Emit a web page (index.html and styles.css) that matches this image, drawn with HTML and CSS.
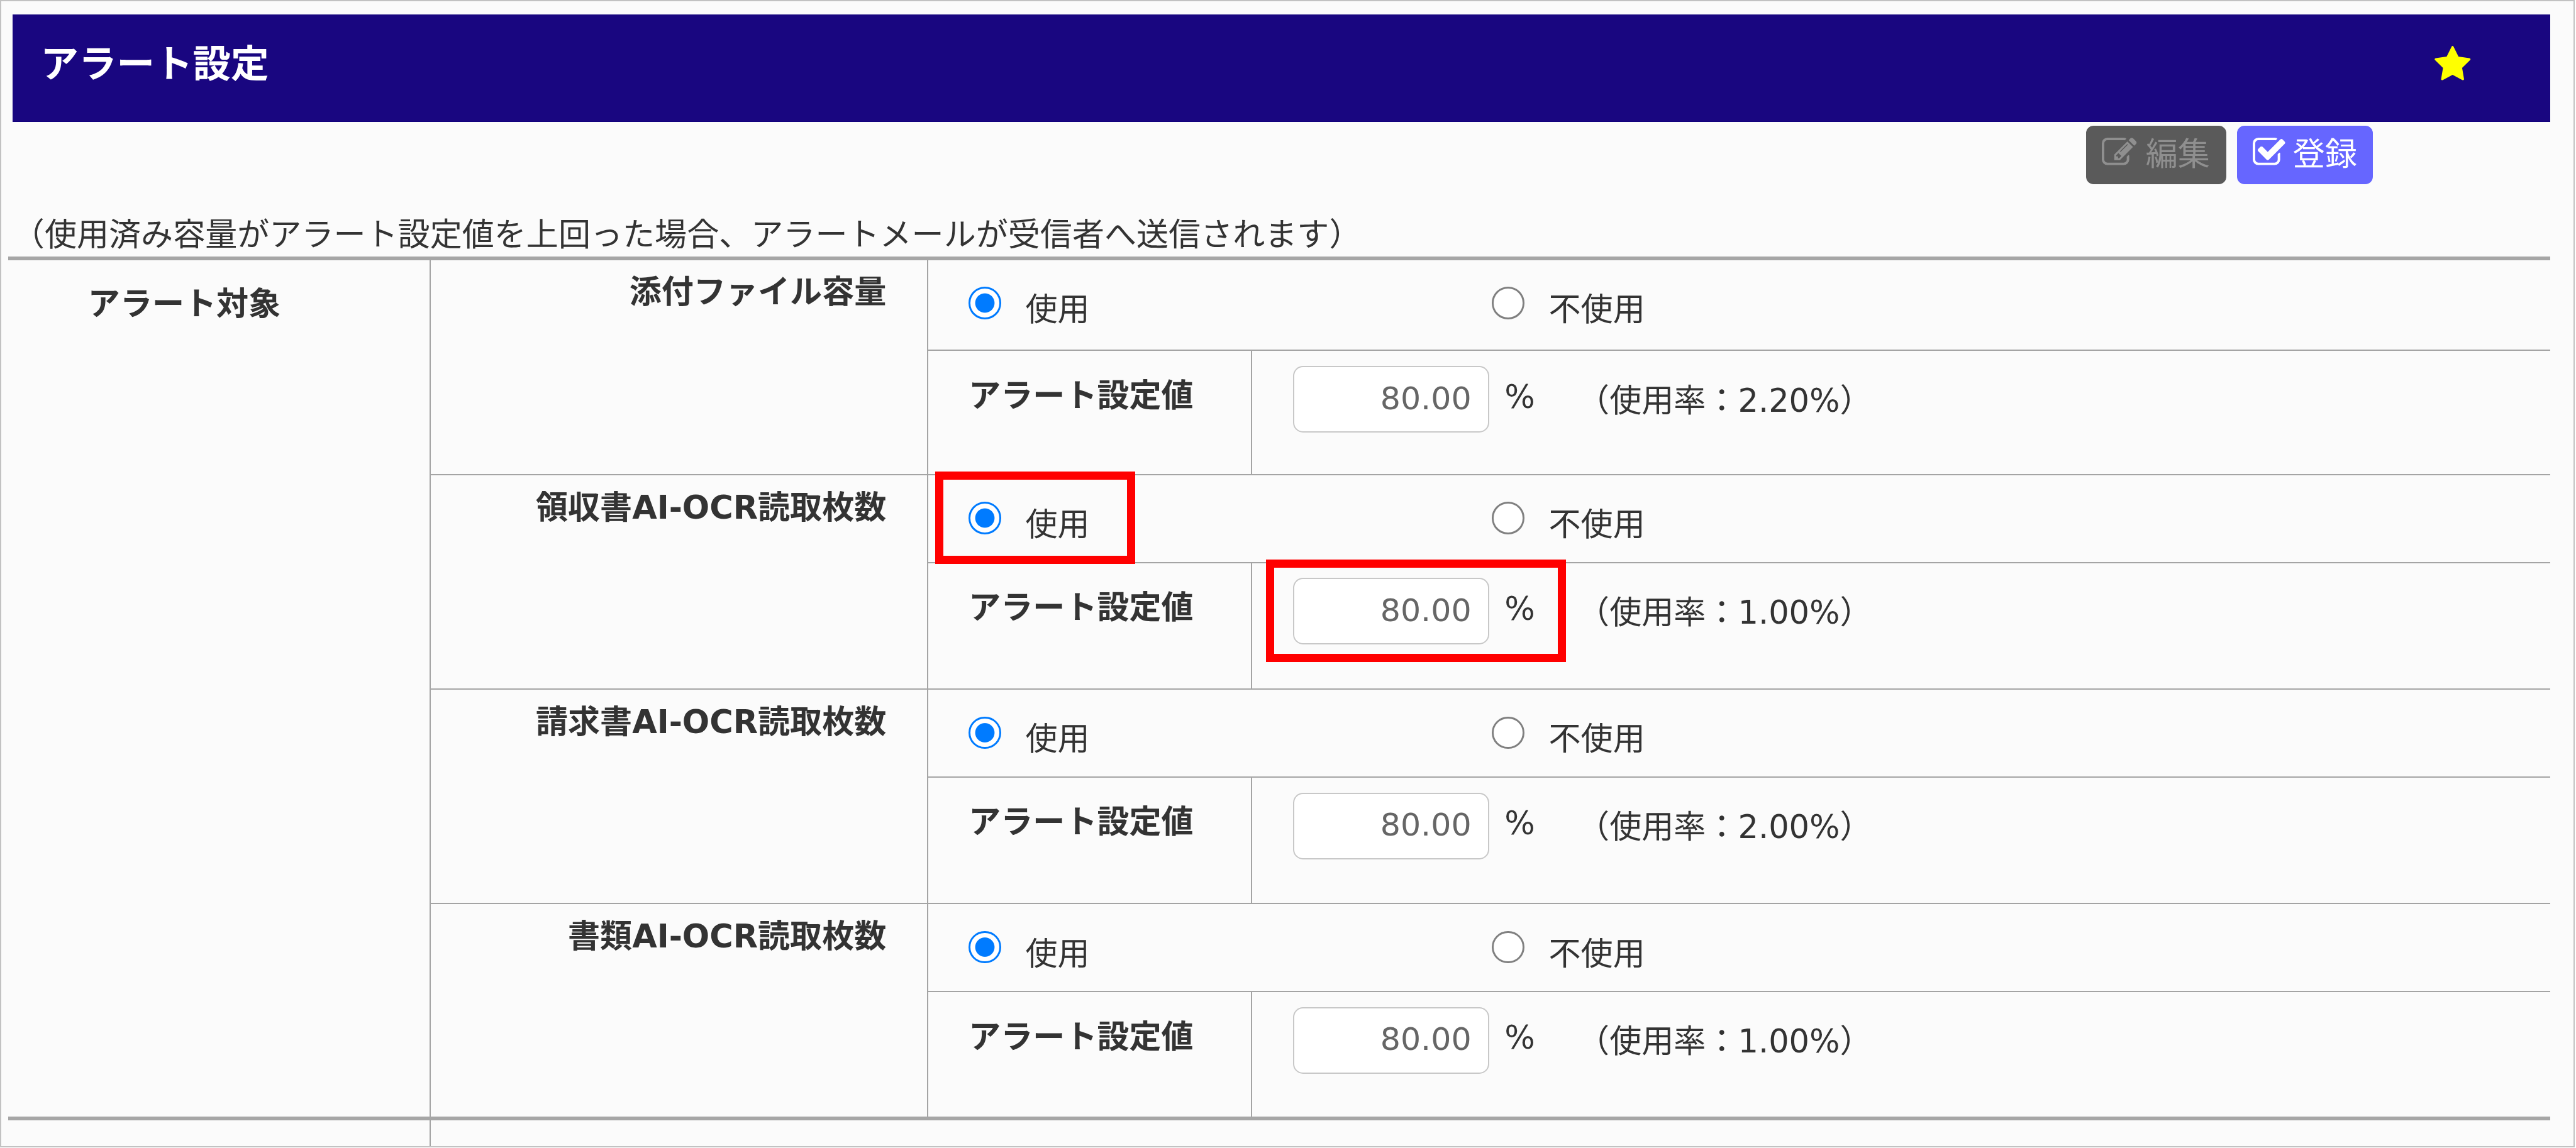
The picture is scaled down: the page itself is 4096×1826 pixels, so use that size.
FILE: index.html
```html
<!DOCTYPE html>
<html lang="ja">
<head>
<meta charset="utf-8">
<title>アラート設定</title>
<link rel="stylesheet" href="styles.css">
</head>
<body>
<main class="frame">
  <header class="title-bar">
    <h1 class="title">アラート設定</h1>
    <svg class="star" viewBox="0 0 1792 1792"><path d="M1728 647q0 22-26 48l-363 354 86 500q1 7 1 20 0 21-10.500 35.500t-30.500 14.500q-19 0-40-12l-449-236-449 236q-22 12-40 12-21 0-31.500-14.500t-10.500-35.500q0-6 2-20l86-500-364-354q-25-27-25-48 0-37 56-46l502-73 225-455q19-41 49-41t49 41l225 455 502 73q56 9 56 46z"/></svg>
  </header>
  <div class="toolbar">
    <button class="btn btn-edit" type="button">
      <svg class="btn-icon" viewBox="0 0 1792 1792"><path d="M888 1184l116-116-152-152-116 116v56h96v96h56zm440-720q-16-16-33 1l-350 350q-17 17-1 33t33-1l350-350q17-17 1-33zm80 594v190q0 119-84.500 203.500t-203.500 84.500h-832q-119 0-203.500-84.500t-84.500-203.500v-832q0-119 84.500-203.500t203.500-84.500h832q63 0 117 25 15 7 18 23 3 17-9 29l-49 49q-14 14-32 8-23-6-45-6h-832q-66 0-113 47t-47 113v832q0 66 47 113t113 47h832q66 0 113-47t47-113v-126q0-13 9-22l64-64q15-15 35-7t20 29zm-96-738l288 288-672 672h-288v-288zm444 132l-92 92-288-288 92-92q28-28 68-28t68 28l152 152q28 28 28 68t-28 68z"/></svg>
      <span class="btn-text">編集</span>
    </button>
    <button class="btn btn-save" type="button">
      <svg class="btn-icon" viewBox="0 0 1792 1792"><path d="M1408 930v318q0 119-84.500 203.500t-203.500 84.500h-832q-119 0-203.500-84.500t-84.500-203.500v-832q0-119 84.500-203.500t203.500-84.500h832q63 0 117 25 15 7 18 23 3 17-9 29l-49 49q-10 10-23 10-3 0-9-2-23-6-45-6h-832q-66 0-113 47t-47 113v832q0 66 47 113t113 47h832q66 0 113-47t47-113v-254q0-13 9-22l64-64q10-10 23-10 6 0 12 3 20 8 20 29zm231-489l-814 814q-24 24-57 24t-57-24l-430-430q-24-24-24-57t24-57l110-110q24-24 57-24t57 24l263 263 647-647q24-24 57-24t57 24l110 110q24 24 24 57t-24 57z"/></svg>
      <span class="btn-text">登録</span>
    </button>
  </div>
  <p class="note">（使用済み容量がアラート設定値を上回った場合、アラートメールが受信者へ送信されます）</p>

  <section class="table">
    <div class="group-name">アラート対象</div>
    <div class="targets">

      <div class="target target-first">
        <div class="target-name">添付ファイル容量</div>
        <div class="target-body">
          <div class="use-row">
            <label class="option"><input class="radio" type="radio" name="r1" checked><span class="option-text">使用</span></label>
            <label class="option"><input class="radio" type="radio" name="r1"><span class="option-text">不使用</span></label>
          </div>
          <div class="value-row">
            <div class="value-label">アラート設定値</div>
            <div class="value-cell">
              <input class="value-input" type="text" value="80.00">
              <span class="unit">%</span>
              <span class="usage">（使用率：2.20%）</span>
            </div>
          </div>
        </div>
      </div>

      <div class="target">
        <div class="target-name">領収書AI-OCR読取枚数</div>
        <div class="target-body">
          <div class="use-row">
            <label class="option"><input class="radio" type="radio" name="r2" checked><span class="option-text">使用</span></label>
            <label class="option"><input class="radio" type="radio" name="r2"><span class="option-text">不使用</span></label>
            <div class="mark mark-use"></div>
          </div>
          <div class="value-row">
            <div class="value-label">アラート設定値</div>
            <div class="value-cell">
              <input class="value-input" type="text" value="80.00">
              <span class="unit">%</span>
              <span class="usage">（使用率：1.00%）</span>
              <div class="mark mark-value"></div>
            </div>
          </div>
        </div>
      </div>

      <div class="target">
        <div class="target-name">請求書AI-OCR読取枚数</div>
        <div class="target-body">
          <div class="use-row">
            <label class="option"><input class="radio" type="radio" name="r3" checked><span class="option-text">使用</span></label>
            <label class="option"><input class="radio" type="radio" name="r3"><span class="option-text">不使用</span></label>
          </div>
          <div class="value-row">
            <div class="value-label">アラート設定値</div>
            <div class="value-cell">
              <input class="value-input" type="text" value="80.00">
              <span class="unit">%</span>
              <span class="usage">（使用率：2.00%）</span>
            </div>
          </div>
        </div>
      </div>

      <div class="target target-last">
        <div class="target-name">書類AI-OCR読取枚数</div>
        <div class="target-body">
          <div class="use-row">
            <label class="option"><input class="radio" type="radio" name="r4" checked><span class="option-text">使用</span></label>
            <label class="option"><input class="radio" type="radio" name="r4"><span class="option-text">不使用</span></label>
          </div>
          <div class="value-row">
            <div class="value-label">アラート設定値</div>
            <div class="value-cell">
              <input class="value-input" type="text" value="80.00">
              <span class="unit">%</span>
              <span class="usage">（使用率：1.00%）</span>
            </div>
          </div>
        </div>
      </div>

    </div>
    <div class="foot-left"></div>
    <div class="foot-right"></div>
  </section>
</main>
</body>
</html>
```
FILE: styles.css
```css
html {
  zoom: 0.99177;
  background: #fff;
}
body {
  margin: 0;
  overflow: hidden;
  font-family: "DejaVu Sans", "Noto Sans CJK JP", sans-serif;
  font-size: 51.5px;
  line-height: 60px;
  color: #333;
}
.frame {
  box-sizing: border-box;
  width: 4128px;
  height: 1840px;
  border: 3px solid #c2c2c2;
  background: #fbfbfb;
  padding: 21px 37px 0 18px;
  display: flex;
  flex-direction: column;
}
.title-bar {
  box-sizing: border-box;
  flex: none;
  height: 173px;
  padding: 0 126px 12px 45px;
  background: #190680;
  border-top: 2px solid #10007c;
  border-bottom: 2px solid #10007c;
  display: flex;
  align-items: center;
  justify-content: space-between;
}
.title {
  margin: 0;
  font-size: 61px;
  line-height: 70px;
  font-weight: 700;
  color: #fff;
}
.star {
  width: 62px;
  height: 62px;
  fill: #ffff00;
}
.toolbar {
  flex: none;
  margin-top: 6px;
  padding-right: 285px;
  display: flex;
  justify-content: flex-end;
  gap: 18px;
}
.btn {
  box-sizing: border-box;
  height: 93px;
  border: 0;
  border-radius: 12px;
  padding: 0 0 8px 25px;
  display: flex;
  align-items: center;
  font: inherit;
}
.btn-edit {
  width: 224px;
  gap: 14px;
  background: #5a5a5a;
  color: #8f8f8f;
}
.btn-save {
  width: 217px;
  gap: 8px;
  background: #6666ff;
  color: #fff;
}
.btn-icon {
  flex: none;
  width: 56px;
  height: 56px;
  fill: currentColor;
}
.btn-text {
  margin-top: 6px;
}
.note {
  flex: none;
  margin: 48px 0 0;
  font-family: "Noto Sans CJK JP", sans-serif;
}
.table {
  flex: 1;
  margin: 8px 0 0 -7px;
  border-top: 7px solid #a6a6a6;
  display: grid;
  grid-template-columns: 678px 1fr;
  grid-template-rows: auto 1fr;
}
.group-name {
  box-sizing: border-box;
  padding: 41px 0 0 128px;
  border-right: 3px solid #a4a4a4;
  font-weight: 700;
}
.targets {
  border-bottom: 7px solid #a6a6a6;
  margin-left: -678px;
  padding-left: 678px;
}
.target {
  box-sizing: border-box;
  height: 344px;
  border-bottom: 3px solid #a4a4a4;
  display: grid;
  grid-template-columns: 797px 1fr;
}
.target-first {
  height: 345px;
}
.target-last {
  height: 341px;
  border-bottom: 0;
}
.target-name {
  box-sizing: border-box;
  padding: 22px 65px 0 0;
  border-right: 3px solid #a4a4a4;
  text-align: right;
  font-weight: 700;
}
.target-body {
  display: flex;
  flex-direction: column;
}
.use-row {
  box-sizing: border-box;
  position: relative;
  flex: none;
  height: 141px;
  padding-left: 65px;
  border-bottom: 3px solid #a4a4a4;
  display: flex;
}
.target-first .use-row {
  height: 146px;
}
.option {
  flex: none;
  width: 839px;
  padding-top: 43px;
  display: flex;
  align-items: flex-start;
  gap: 39px;
}
.option-text {
  margin-top: 7px;
}
.radio {
  appearance: none;
  flex: none;
  box-sizing: border-box;
  width: 52px;
  height: 52px;
  margin: 0;
  border-radius: 50%;
  border: 4px solid #808080;
  background: #fff;
}
.radio:checked {
  border-color: #007bff;
  background: radial-gradient(circle closest-side, #007bff 15px, #fff 16px);
}
.value-row {
  flex: 1;
  display: flex;
}
.value-label {
  box-sizing: border-box;
  flex: none;
  width: 520px;
  padding: 42px 0 0 65px;
  border-right: 3px solid #a4a4a4;
  font-weight: 700;
}
.value-cell {
  position: relative;
  flex: 1;
  padding: 24px 0 0 65px;
  display: flex;
  align-items: flex-start;
}
.value-input {
  box-sizing: border-box;
  flex: none;
  width: 315px;
  height: 107px;
  padding: 0 27px 4px 0;
  border: 3px solid #c8c8c8;
  border-radius: 16px;
  background: #fff;
  outline: 0;
  text-align: right;
  font: inherit;
  font-size: 51px;
  color: #666;
}
.unit {
  margin: 20px 0 0 24px;
}
.usage {
  margin: 26px 0 0 68px;
}
.mark {
  position: absolute;
  box-sizing: border-box;
  border: 14px solid #ff0000;
  pointer-events: none;
}
.mark-use {
  left: 11px;
  top: -6px;
  width: 321px;
  height: 148px;
}
.mark-value {
  left: 22px;
  top: -6px;
  width: 481px;
  height: 165px;
}
.foot-left {
  border-right: 3px solid #a4a4a4;
}
```
